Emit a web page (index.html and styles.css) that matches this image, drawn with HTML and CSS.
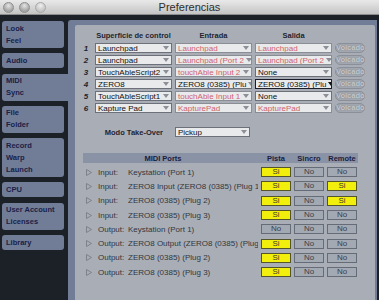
FILE: index.html
```html
<!DOCTYPE html>
<html lang="es">
<head>
    <meta charset="UTF-8">
    <title>Preferencias</title>
    <link rel="stylesheet" href="styles.css">
</head>
<body>
    <!-- Title bar -->
    <header class="titlebar">
        <div class="lights">
            <span class="light"></span>
            <span class="light"></span>
            <span class="light light-off"></span>
        </div>
        <div class="title">Preferencias</div>
    </header>

    <div class="window">
        <!-- Tabs -->
        <nav class="tabs">
            <div class="tab">Look<br>Feel</div>
            <div class="tab">Audio</div>
            <div class="tab active">MIDI<br>Sync</div>
            <div class="tab">File<br>Folder</div>
            <div class="tab">Record<br>Warp<br>Launch</div>
            <div class="tab">CPU</div>
            <div class="tab">User Account<br>Licenses</div>
            <div class="tab">Library</div>
        </nav>

        <!-- MIDI panel -->
        <main class="panel">
            <div class="content">
                <div class="surfaces">
                    <div class="srow shead">
                        <span></span>
                        <span>Superficie de control</span>
                        <span>Entrada</span>
                        <span>Salida</span>
                        <span></span>
                    </div>
                    <div class="srow">
                        <span class="num">1</span>
                        <div class="select">Launchpad<i class="arrow"></i></div>
                        <div class="select pink">Launchpad<i class="arrow"></i></div>
                        <div class="select pink">Launchpad<i class="arrow"></i></div>
                        <div class="dump">Volcado</div>
                    </div>
                    <div class="srow">
                        <span class="num">2</span>
                        <div class="select">Launchpad<i class="arrow"></i></div>
                        <div class="select pink">Launchpad (Port 2<i class="arrow"></i></div>
                        <div class="select pink">Launchpad (Port 2<i class="arrow"></i></div>
                        <div class="dump">Volcado</div>
                    </div>
                    <div class="srow">
                        <span class="num">3</span>
                        <div class="select">TouchAbleScript2<i class="arrow"></i></div>
                        <div class="select pink">touchAble Input 2<i class="arrow"></i></div>
                        <div class="select">None<i class="arrow"></i></div>
                        <div class="dump">Volcado</div>
                    </div>
                    <div class="srow">
                        <span class="num">4</span>
                        <div class="select">ZERO8<i class="arrow"></i></div>
                        <div class="select">ZERO8 (0385) (Plu<i class="arrow"></i></div>
                        <div class="select focus">ZERO8 (0385) (Plu<i class="arrow"></i></div>
                        <div class="dump">Volcado</div>
                    </div>
                    <div class="srow">
                        <span class="num">5</span>
                        <div class="select">TouchAbleScript1<i class="arrow"></i></div>
                        <div class="select pink">touchAble Input 1<i class="arrow"></i></div>
                        <div class="select">None<i class="arrow"></i></div>
                        <div class="dump">Volcado</div>
                    </div>
                    <div class="srow">
                        <span class="num">6</span>
                        <div class="select">Kapture Pad<i class="arrow"></i></div>
                        <div class="select pink">KapturePad<i class="arrow"></i></div>
                        <div class="select pink">KapturePad<i class="arrow"></i></div>
                        <div class="dump">Volcado</div>
                    </div>
                </div>

                <div class="srow takeover">
                    <span class="takeover-label">Modo Take-Over</span>
                    <div class="select takeover-select">Pickup<i class="arrow"></i></div>
                </div>

                <div class="ports">
                    <div class="phead">
                        <span class="phead-name">MIDI Ports</span>
                        <span class="pcol">Pista</span>
                        <span class="pcol">Sincro</span>
                        <span class="pcol">Remote</span>
                    </div>
                    <div class="prow">
                        <span class="tri"><svg width="6" height="7" viewBox="0 0 6 7"><path d="M0.5 0.5L5.5 3.5L0.5 6.5Z" fill="none" stroke="#7c818b"/></svg></span>
                        <span class="ptype">Input:</span>
                        <span class="pname">Keystation (Port 1)</span>
                        <span class="btn yes">Si</span><span class="btn">No</span><span class="btn">No</span>
                    </div>
                    <div class="prow">
                        <span class="tri"><svg width="6" height="7" viewBox="0 0 6 7"><path d="M0.5 0.5L5.5 3.5L0.5 6.5Z" fill="none" stroke="#7c818b"/></svg></span>
                        <span class="ptype">Input:</span>
                        <span class="pname">ZERO8 Input (ZERO8 (0385) (Plug 1</span>
                        <span class="btn yes">Si</span><span class="btn">No</span><span class="btn yes">Si</span>
                    </div>
                    <div class="prow">
                        <span class="tri"><svg width="6" height="7" viewBox="0 0 6 7"><path d="M0.5 0.5L5.5 3.5L0.5 6.5Z" fill="none" stroke="#7c818b"/></svg></span>
                        <span class="ptype">Input:</span>
                        <span class="pname">ZERO8 (0385) (Plug 2)</span>
                        <span class="btn yes">Si</span><span class="btn">No</span><span class="btn yes">Si</span>
                    </div>
                    <div class="prow">
                        <span class="tri"><svg width="6" height="7" viewBox="0 0 6 7"><path d="M0.5 0.5L5.5 3.5L0.5 6.5Z" fill="none" stroke="#7c818b"/></svg></span>
                        <span class="ptype">Input:</span>
                        <span class="pname">ZERO8 (0385) (Plug 3)</span>
                        <span class="btn yes">Si</span><span class="btn">No</span><span class="btn">No</span>
                    </div>
                    <div class="prow">
                        <span class="tri"><svg width="6" height="7" viewBox="0 0 6 7"><path d="M0.5 0.5L5.5 3.5L0.5 6.5Z" fill="none" stroke="#7c818b"/></svg></span>
                        <span class="ptype">Output:</span>
                        <span class="pname">Keystation (Port 1)</span>
                        <span class="btn">No</span><span class="btn">No</span><span class="btn">No</span>
                    </div>
                    <div class="prow">
                        <span class="tri"><svg width="6" height="7" viewBox="0 0 6 7"><path d="M0.5 0.5L5.5 3.5L0.5 6.5Z" fill="none" stroke="#7c818b"/></svg></span>
                        <span class="ptype">Output:</span>
                        <span class="pname">ZERO8 Output (ZERO8 (0385) (Plug</span>
                        <span class="btn yes">Si</span><span class="btn">No</span><span class="btn">No</span>
                    </div>
                    <div class="prow">
                        <span class="tri"><svg width="6" height="7" viewBox="0 0 6 7"><path d="M0.5 0.5L5.5 3.5L0.5 6.5Z" fill="none" stroke="#7c818b"/></svg></span>
                        <span class="ptype">Output:</span>
                        <span class="pname">ZERO8 (0385) (Plug 2)</span>
                        <span class="btn yes">Si</span><span class="btn">No</span><span class="btn">No</span>
                    </div>
                    <div class="prow">
                        <span class="tri"><svg width="6" height="7" viewBox="0 0 6 7"><path d="M0.5 0.5L5.5 3.5L0.5 6.5Z" fill="none" stroke="#7c818b"/></svg></span>
                        <span class="ptype">Output:</span>
                        <span class="pname">ZERO8 (0385) (Plug 3)</span>
                        <span class="btn yes">Si</span><span class="btn">No</span><span class="btn">No</span>
                    </div>
                </div>
            </div>
        </main>
    </div>
</body>
</html>
```

FILE: styles.css
```css
* {
    margin: 0;
    padding: 0;
    box-sizing: border-box;
    font-family: "Liberation Sans", Arial, sans-serif;
}

body {
    background-color: #1c2027;
    height: 100vh;
    overflow: hidden;
}

/* Title bar */
.titlebar {
    height: 15px;
    display: grid;
    grid-template-columns: 1fr auto 1fr;
    align-items: center;
    background: linear-gradient(#e9e9e9, #c4c4c4);
    border-bottom: 1px solid #8c8c8c;
}

.lights {
    display: flex;
    gap: 5px;
    padding-left: 3px;
}

.light {
    width: 11px;
    height: 11px;
    border-radius: 50%;
    background: radial-gradient(circle at 50% 30%, #e4e4e4, #a2a2a2 70%);
    border: 1px solid #8e8e8e;
}

.light-off {
    background: radial-gradient(circle at 50% 30%, #f0f0f0, #c2c2c2 70%);
    border-color: #a8a8a8;
}

.title {
    font-size: 11px;
    color: #2e2e2e;
}

/* Window */
.window {
    display: flex;
    height: calc(100vh - 15px);
    padding: 5px 2px 0 2px;
}

.tabs {
    width: 62px;
    display: flex;
    flex-direction: column;
    gap: 5.3px;
    padding-top: 1px;
}

.tab {
    background-color: #717c97;
    color: #1a2147;
    font-size: 7.5px;
    font-weight: bold;
    line-height: 12px;
    padding: 1.5px 4px;
    border-radius: 3px;
}

.tab.active {
    margin-right: -4px;
    border-radius: 3px 0 0 3px;
}

.panel {
    flex: 1;
    margin-left: 4px;
    background-color: #717c97;
    padding: 5px 2px 0 7px;
    border-radius: 3px 0 0 0;
}

.content {
    height: 100%;
    background-color: #a9aeb6;
    border-radius: 2px 2px 0 0;
    padding: 5px 0 0 5px;
}

/* Control surfaces */
.surfaces {
    display: flex;
    flex-direction: column;
    gap: 2px;
}

.srow {
    display: grid;
    grid-template-columns: 12px 77px 77px 77px 30px;
    column-gap: 3px;
    height: 10px;
    align-items: center;
}

.shead {
    margin-bottom: 1px;
    font-size: 7.5px;
    font-weight: bold;
    color: #1f2430;
    text-align: center;
}

.num {
    font-size: 8px;
    font-weight: bold;
    font-style: italic;
    color: #1f2430;
    text-align: center;
}

.select {
    height: 10px;
    display: flex;
    align-items: center;
    justify-content: space-between;
    padding: 0 2px 0 2px;
    background-color: #e9eaec;
    border: 1px solid #6c7079;
    font-size: 8px;
    color: #111;
    white-space: nowrap;
    overflow: hidden;
}

.select.pink {
    color: #d0626d;
    border-color: #8a8d94;
}

.select.focus {
    border: 1.5px solid #1b1f2c;
}

.arrow {
    flex-shrink: 0;
    width: 0;
    height: 0;
    margin-left: 2px;
    border-left: 3px solid transparent;
    border-right: 3px solid transparent;
    border-top: 4px solid #8a8f98;
}

.select.focus .arrow {
    border-top-color: #111;
}

.dump {
    height: 10px;
    border: 1px solid #8a8f99;
    border-radius: 6px;
    background-color: #a1a6af;
    color: #c6c9cf;
    font-size: 7.5px;
    font-weight: bold;
    line-height: 8px;
    text-align: center;
    text-shadow: 0 0 1px #6f747e;
}

/* Take-over */
.takeover {
    margin-top: 14px;
}

.takeover-label {
    grid-column: 1 / 3;
    text-align: right;
    padding-right: 9px;
    font-size: 7.5px;
    font-weight: bold;
    color: #1f2430;
}

.takeover-select {
    width: 75px;
}

/* MIDI ports */
.ports {
    margin: 16px 0 0 3px;
    width: 275px;
}

.phead {
    display: flex;
    align-items: center;
    height: 10px;
    margin-bottom: 2px;
    background-color: #8a92a6;
    font-size: 7.5px;
    font-weight: bold;
    color: #1a2040;
}

.phead-name {
    width: 175px;
    padding-right: 15px;
    text-align: center;
}

.pcol {
    width: 30px;
    margin-left: 3px;
    text-align: center;
}

.prow {
    display: flex;
    align-items: center;
    height: 14.3px;
    font-size: 8px;
    color: #33363d;
}

.tri {
    width: 15px;
    padding-left: 3px;
    display: flex;
}

.ptype {
    width: 30px;
}

.pname {
    width: 130px;
    white-space: nowrap;
    overflow: hidden;
}

.btn {
    width: 30px;
    height: 10px;
    margin-left: 3px;
    background-color: #a3a9b3;
    border: 1px solid #666c77;
    font-size: 8px;
    line-height: 8px;
    text-align: center;
    color: #3a3f48;
}

.btn.yes {
    background-color: #f3ef0c;
    border-color: #55552a;
    color: #3a3a20;
}
```
